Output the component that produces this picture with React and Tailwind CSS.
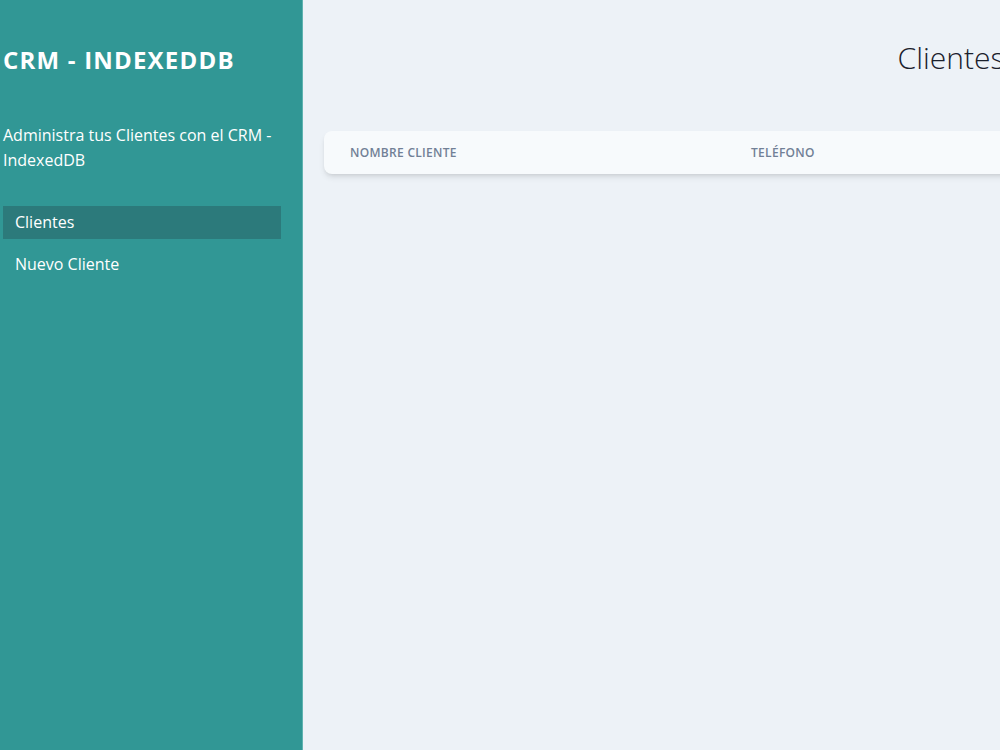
import React from 'react';

// Sidebar navigation links
const links = [
  { label: 'Clientes', active: true },
  { label: 'Nuevo Cliente', active: false },
];

function Sidebar() {
  return (
    <aside className="w-[303px] shrink-0 bg-[#319795] pl-[3px] pr-[21px] pt-11 border-r border-[#5fb3b0]">
      <h2 className="text-2xl font-bold text-white tracking-wider leading-8">CRM - INDEXEDDB</h2>
      <p className="mt-[47px] text-white text-base leading-[25px]">
        Administra tus Clientes con el CRM - IndexedDB
      </p>
      <nav className="mt-[33px] flex flex-col gap-[9px]">
        {links.map((l) => (
          <a
            key={l.label}
            href="#"
            className={
              'block px-3 h-[33px] leading-[33px] text-white text-base ' +
              (l.active ? 'bg-[#2c7a7b]' : '')
            }
          >
            {l.label}
          </a>
        ))}
      </nav>
    </aside>
  );
}

function Main() {
  return (
    <main className="w-[1296px] shrink-0 px-[21px] pt-10">
      <h2 className="text-3xl font-light text-center text-[#1a202c] leading-9">Clientes</h2>
      <div className="mt-[55px] rounded-lg shadow-md bg-[#f7fafc] overflow-hidden">
        <table className="w-full">
          <thead>
            <tr>
              <th className="w-[427px] pl-[26px] h-[43px] text-left text-xs font-semibold uppercase tracking-wide text-[#718096]">
                Nombre Cliente
              </th>
              <th className="text-left text-xs font-semibold uppercase tracking-wide text-[#718096]">
                Teléfono
              </th>
              <th className="text-left text-xs font-semibold uppercase tracking-wide text-[#718096]">
                Empresa
              </th>
              <th className="text-left text-xs font-semibold uppercase tracking-wide text-[#718096]">
                Acciones
              </th>
            </tr>
          </thead>
        </table>
      </div>
    </main>
  );
}

export default function App() {
  return (
    <div
      className="flex w-[1000px] h-[750px] overflow-hidden bg-[#edf2f7]"
      style={{ fontFamily: '"Open Sans", "Noto Sans", sans-serif' }}
    >
      <Sidebar />
      <Main />
    </div>
  );
}
